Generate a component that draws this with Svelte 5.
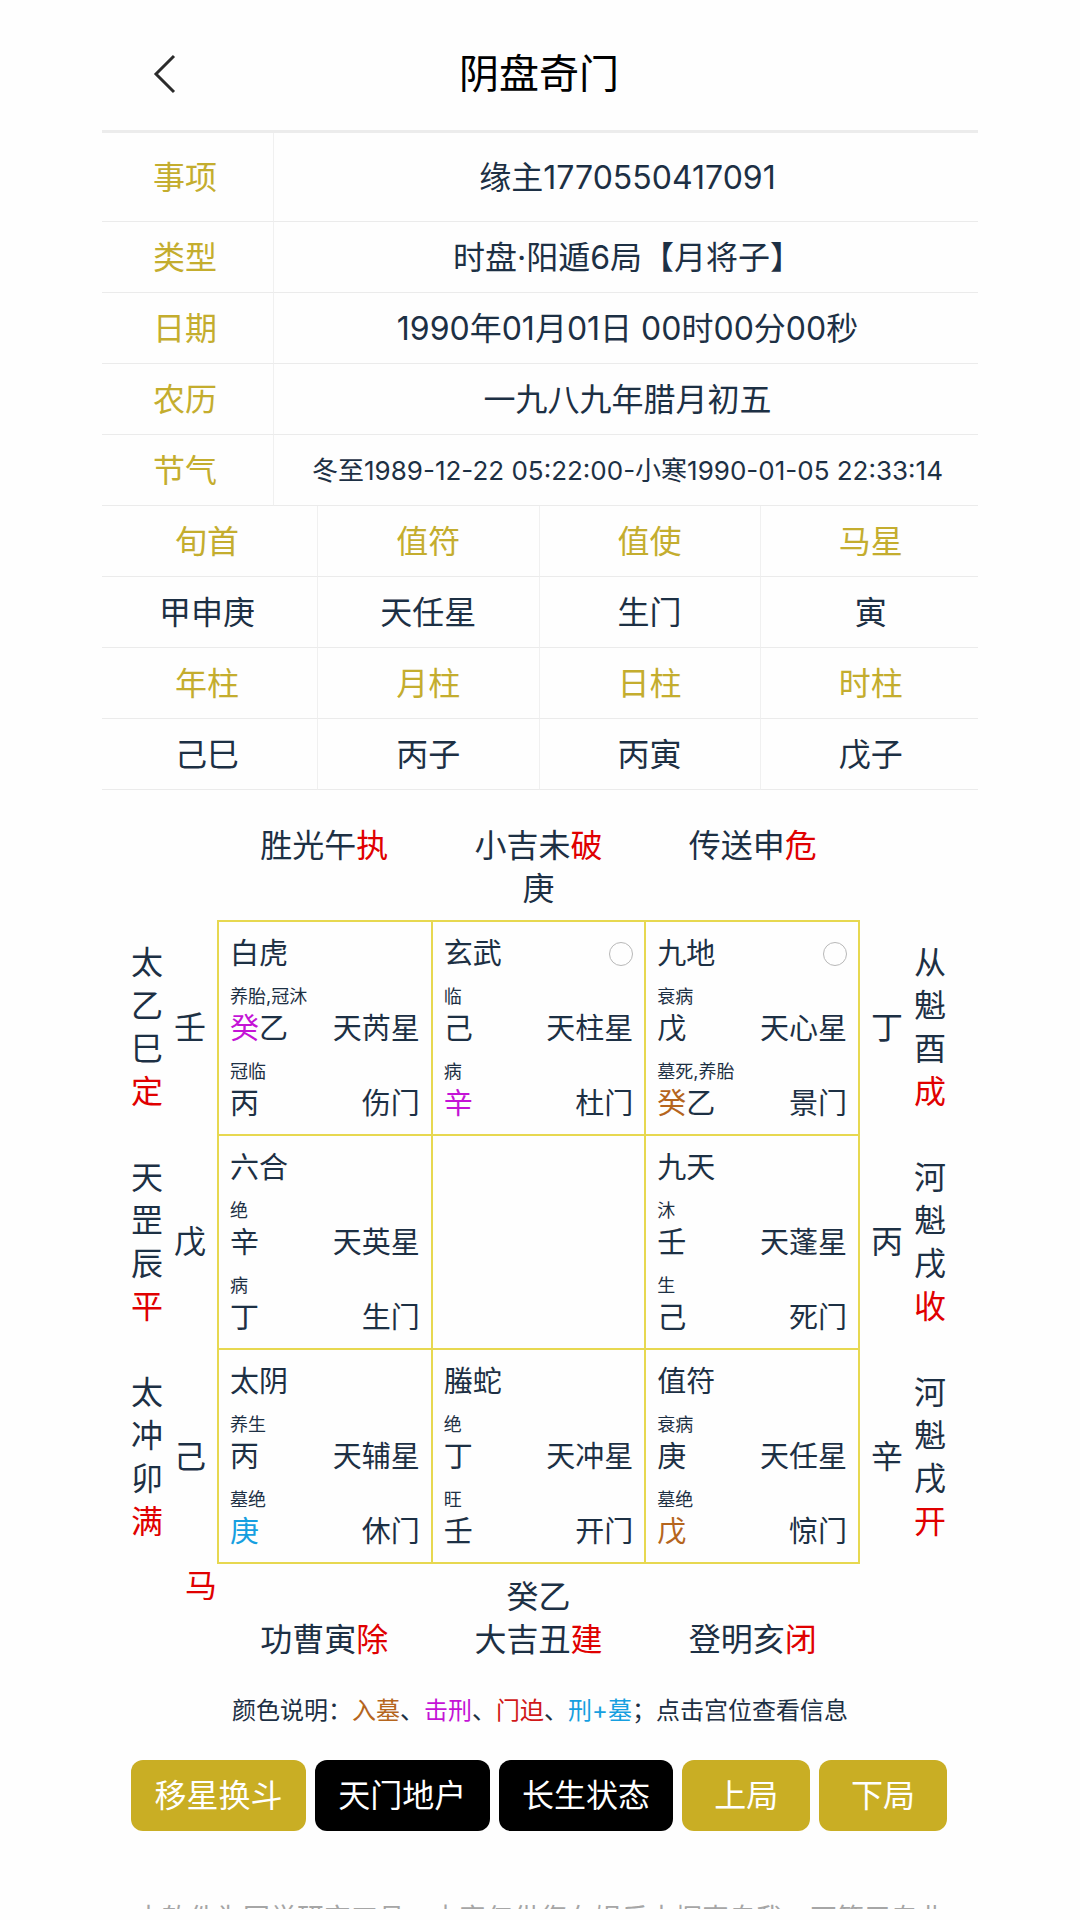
<script lang="ts">
	type Tone = "tomb" | "punish" | "both";

	interface Stem {
		text: string;
		tone?: Tone;
	}

	interface Palace {
		god: string;
		star: string;
		gate: string;
		skyState: string;
		sky: Stem[];
		earthState: string;
		earth: Stem[];
		empty?: boolean;
	}

	interface Side {
		month: string;
		day: string;
		stem?: string;
	}

	const info = [
		{ label: "事项", value: "缘主1770550417091" },
		{ label: "类型", value: "时盘·阳遁6局【月将子】" },
		{ label: "日期", value: "1990年01月01日 00时00分00秒" },
		{ label: "农历", value: "一九八九年腊月初五" },
		{ label: "节气", value: "冬至1989-12-22 05:22:00-小寒1990-01-05 22:33:14", small: true },
	];

	const pillars = [
		{ heads: ["旬首", "值符", "值使", "马星"], values: ["甲申庚", "天任星", "生门", "寅"] },
		{ heads: ["年柱", "月柱", "日柱", "时柱"], values: ["己巳", "丙子", "丙寅", "戊子"] },
	];

	const top: Side[] = [
		{ month: "胜光午", day: "执" },
		{ month: "小吉未", day: "破", stem: "庚" },
		{ month: "传送申", day: "危" },
	];
	const bottom: Side[] = [
		{ month: "功曹寅", day: "除" },
		{ month: "大吉丑", day: "建", stem: "癸乙" },
		{ month: "登明亥", day: "闭" },
	];
	const left: Side[] = [
		{ month: "太乙巳", day: "定", stem: "壬" },
		{ month: "天罡辰", day: "平", stem: "戊" },
		{ month: "太冲卯", day: "满", stem: "己" },
	];
	const right: Side[] = [
		{ month: "从魁酉", day: "成", stem: "丁" },
		{ month: "河魁戌", day: "收", stem: "丙" },
		{ month: "河魁戌", day: "开", stem: "辛" },
	];

	// Row by row; the middle palace stays blank.
	const palaces: (Palace | null)[] = [
		{
			god: "白虎", star: "天芮星", gate: "伤门",
			skyState: "养胎,冠沐", sky: [{ text: "癸", tone: "punish" }, { text: "乙" }],
			earthState: "冠临", earth: [{ text: "丙" }],
		},
		{
			god: "玄武", star: "天柱星", gate: "杜门", empty: true,
			skyState: "临", sky: [{ text: "己" }],
			earthState: "病", earth: [{ text: "辛", tone: "punish" }],
		},
		{
			god: "九地", star: "天心星", gate: "景门", empty: true,
			skyState: "衰病", sky: [{ text: "戊" }],
			earthState: "墓死,养胎", earth: [{ text: "癸", tone: "tomb" }, { text: "乙" }],
		},
		{
			god: "六合", star: "天英星", gate: "生门",
			skyState: "绝", sky: [{ text: "辛" }],
			earthState: "病", earth: [{ text: "丁" }],
		},
		null,
		{
			god: "九天", star: "天蓬星", gate: "死门",
			skyState: "沐", sky: [{ text: "壬" }],
			earthState: "生", earth: [{ text: "己" }],
		},
		{
			god: "太阴", star: "天辅星", gate: "休门",
			skyState: "养生", sky: [{ text: "丙" }],
			earthState: "墓绝", earth: [{ text: "庚", tone: "both" }],
		},
		{
			god: "螣蛇", star: "天冲星", gate: "开门",
			skyState: "绝", sky: [{ text: "丁" }],
			earthState: "旺", earth: [{ text: "壬" }],
		},
		{
			god: "值符", star: "天任星", gate: "惊门",
			skyState: "衰病", sky: [{ text: "庚" }],
			earthState: "墓绝", earth: [{ text: "戊", tone: "tomb" }],
		},
	];

	let showSky = $state(true);
	let showStates = $state(true);
	let selected = $state(-1);
</script>

{#snippet stems(list: Stem[])}
	<span>{#each list as s, i (i)}<span class={s.tone}>{s.text}</span>{/each}</span>
{/snippet}

<main>
	<header>
		<button class="back" aria-label="返回">
			<svg viewBox="0 0 24 40" width="24" height="40" fill="none" stroke="#2b2b2b" stroke-width="3">
				<path d="M22 2 4 20l18 18" />
			</svg>
		</button>
		<h1>阴盘奇门</h1>
	</header>

	<div class="tables">
		<table class="info">
			<tbody>
				{#each info as row (row.label)}
					<tr>
						<th scope="row">{row.label}</th>
						<td class:small={row.small}>{row.value}</td>
					</tr>
				{/each}
			</tbody>
		</table>
		<table class="pillars">
			<tbody>
				{#each pillars as group, i (i)}
					<tr>
						{#each group.heads as h (h)}<th>{h}</th>{/each}
					</tr>
					<tr>
						{#each group.values as v (v)}<td>{v}</td>{/each}
					</tr>
				{/each}
			</tbody>
		</table>
	</div>

	<section class="chart">
		<div class="edge above">
			{#each top as s (s.month)}
				<div>
					<div>{s.month}<span class="day">{s.day}</span></div>
					{#if s.stem}<div>{s.stem}</div>{/if}
				</div>
			{/each}
		</div>

		<div class="side before">
			{#each left as s, i (i)}
				<div class="slot">
					<span class="column">{s.month}{#if showSky}<span class="day">{s.day}</span>{/if}</span>
					<span>{s.stem}</span>
				</div>
			{/each}
		</div>

		<div class="board">
			{#each palaces as p, i (i)}
				<button class="palace" aria-label={p ? p.god : "中宫"} aria-pressed={selected === i} onclick={() => (selected = i)}>
					{#if p}
						<span class="line">
							<span>{p.god}</span>
							{#if p.empty}<span class="ring"></span>{/if}
						</span>
						<span class="group">
							<span class="state">{showStates ? p.skyState : ""}</span>
							<span class="line">{@render stems(p.sky)}<span>{p.star}</span></span>
						</span>
						<span class="group">
							<span class="state">{showStates ? p.earthState : ""}</span>
							<span class="line">{@render stems(p.earth)}<span>{p.gate}</span></span>
						</span>
					{/if}
				</button>
			{/each}
		</div>

		<div class="side after">
			{#each right as s, i (i)}
				<div class="slot">
					<span>{s.stem}</span>
					<span class="column">{s.month}{#if showSky}<span class="day">{s.day}</span>{/if}</span>
				</div>
			{/each}
		</div>

		<div class="horse day">马</div>
		<div class="edge below">
			{#each bottom as s (s.month)}
				<div>
					{#if s.stem}<div>{s.stem}</div>{/if}
					<div>{s.month}<span class="day">{s.day}</span></div>
				</div>
			{/each}
		</div>
	</section>

	<p class="legend">
		颜色说明：<span class="tomb">入墓</span>、<span class="punish">击刑</span>、<span class="press">门迫</span>、<span class="both">刑+墓</span>；点击宫位查看信息
	</p>

	<div class="actions">
		<button>移星换斗</button>
		<button class="dark" onclick={() => (showSky = !showSky)}>天门地户</button>
		<button class="dark" onclick={() => (showStates = !showStates)}>长生状态</button>
		<button>上局</button>
		<button>下局</button>
	</div>

	<p class="notice">本软件为国学研究工具，内容仅供您在娱乐中探索自我，不等于专业</p>
</main>

<style>
	:global(body) {
		background: #fefefe;
	}
	main {
		padding: 0 102px;
		color: #1d3044;
		font-family: Inter, "Noto Sans CJK SC", sans-serif;
		font-size: 32px;
		line-height: 43px;
	}
	button {
		padding: 0;
		border: none;
		background: none;
		color: inherit;
		font: inherit;
		cursor: pointer;
	}

	header {
		display: grid;
		grid-template-columns: 80px 1fr 80px;
		align-items: center;
		padding: 45px 24px 27px 22px;
		border-bottom: 3px solid #ececec;
	}
	.back {
		display: flex;
		justify-content: center;
	}
	h1 {
		margin: 0;
		color: #000;
		font-size: 40px;
		font-weight: 400;
		line-height: 58px;
		text-align: center;
	}

	/* The tables run a little past both edges and get cut there. */
	.tables {
		overflow: hidden;
	}
	table {
		width: calc(100% + 9px);
		margin: 0 -4px 0 -5px;
		table-layout: fixed;
		border-spacing: 0;
	}
	th,
	td {
		box-sizing: border-box;
		height: 71px;
		padding: 0;
		border-bottom: 1px solid #ebebeb;
		border-right: 1px solid #f0f0f0;
		font-weight: 400;
		text-align: center;
	}
	th {
		color: #c4ad2e;
	}
	.info th {
		width: 177px;
	}
	.info tr:first-child > * {
		height: 89px;
	}
	.small {
		font-size: 26px;
	}

	.chart {
		display: grid;
		grid-template-columns: 115px minmax(0, 1fr) 118px;
		padding-top: 34px;
	}
	.edge {
		display: grid;
		grid-column: 2;
		grid-template-columns: repeat(3, minmax(0, 1fr));
		text-align: center;
	}
	.above {
		padding-bottom: 10px;
	}
	.below {
		align-items: end;
		padding-top: 11px;
	}
	.side {
		display: grid;
		grid-template-rows: repeat(3, 1fr);
	}
	.before {
		grid-column: 1;
		justify-content: end;
		padding-right: 11px;
	}
	.after {
		justify-content: start;
		padding-left: 11px;
	}
	.slot {
		display: flex;
		align-items: center;
		gap: 11px;
	}
	.column {
		width: 32px;
		word-break: break-all;
	}
	.day {
		color: #e00000;
	}
	.horse {
		text-align: right;
	}

	.board {
		display: grid;
		grid-template-columns: repeat(3, minmax(0, 1fr));
		border-top: 2px solid #e7d850;
		border-left: 2px solid #e7d850;
	}
	.palace {
		display: flex;
		flex-direction: column;
		gap: 11px;
		padding: 12px 11px 10px;
		border-right: 2px solid #e7d850;
		border-bottom: 2px solid #e7d850;
		font-size: 29px;
		line-height: 40px;
	}
	.line {
		display: flex;
		align-items: center;
		justify-content: space-between;
	}
	.group {
		display: flex;
		flex-direction: column;
	}
	.state {
		min-height: 24px;
		font-size: 18px;
		line-height: 24px;
		text-align: left;
	}
	.ring {
		box-sizing: border-box;
		width: 24px;
		height: 24px;
		border: 1px solid #b8b8b8;
		border-radius: 50%;
	}

	.tomb {
		color: #b5651d;
	}
	.punish {
		color: #c413d6;
	}
	.press {
		color: #d01818;
	}
	.both {
		color: #169fe0;
	}

	.legend {
		margin: 0;
		padding: 28px 0;
		font-size: 24px;
		text-align: center;
	}
	.actions {
		display: grid;
		grid-template-columns: 175fr 175fr 175fr 128fr 128fr;
		gap: 9px;
		padding: 0 31px 0 29px;
	}
	.actions button {
		height: 71px;
		border-radius: 12px;
		background: #c9ae24;
		color: #fff;
	}
	.actions .dark {
		background: #000;
	}
	.notice {
		height: 10px;
		margin: 68px 0 0;
		overflow: hidden;
		color: #a6a6a6;
		font-size: 27px;
		line-height: 40px;
		text-align: center;
		white-space: nowrap;
	}
</style>
